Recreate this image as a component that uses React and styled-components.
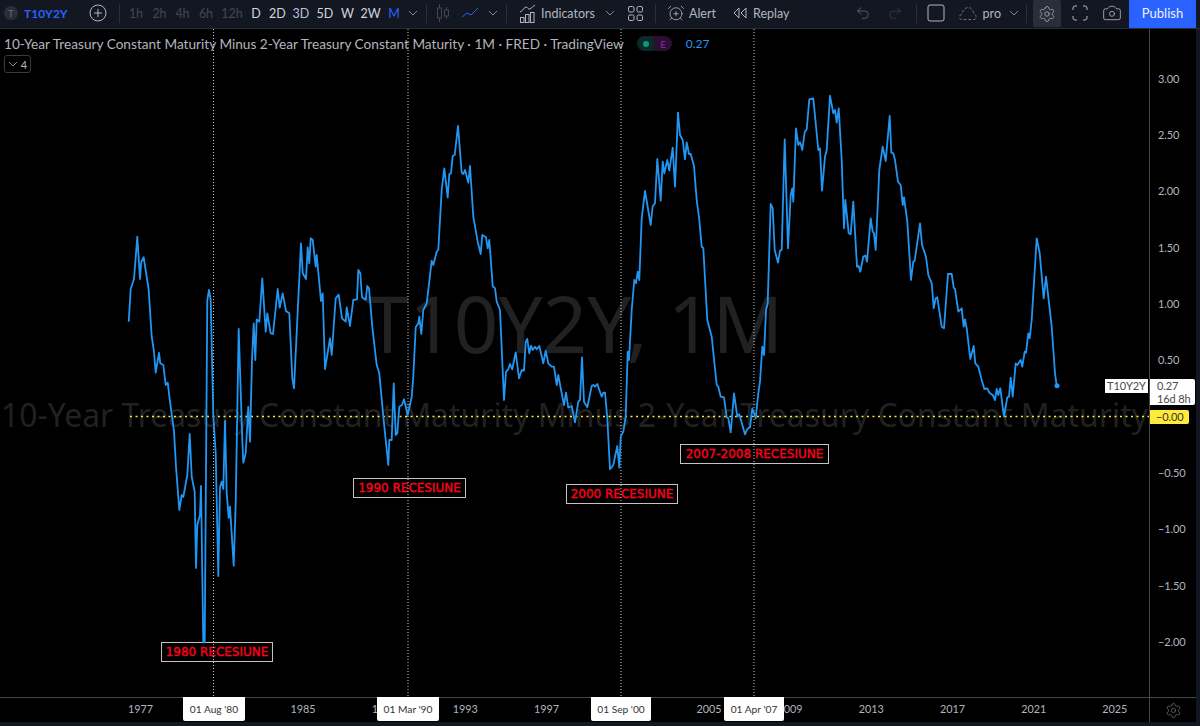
import React from "react";
import styled, { createGlobalStyle } from "styled-components";
import { AlarmClockPlus, Camera, Redo2, Settings, Undo2 } from "lucide-react";

const GlobalStyle = createGlobalStyle`
  html, body {
    margin: 0;
    padding: 0;
    background: #131722;
    overflow: hidden;
  }
  * {
    box-sizing: border-box;
  }
`;

const Page = styled.div`
  width: 1200px;
  height: 726px;
  display: flex;
  flex-direction: column;
  background: #131722;
  font-family: "Lato", "Liberation Sans", sans-serif;
  color: #b2b5be;
`;

const Toolbar = styled.header`
  height: 29px;
  flex: none;
  display: flex;
  align-items: stretch;
  padding-right: 4px;
  padding-bottom: 2px;
  border-bottom: 1px solid #2a2e39;
  font-size: 12.5px;
`;

const SymbolBox = styled.div`
  width: 84px;
  display: flex;
  align-items: center;
  gap: 6px;
  padding-left: 4px;
`;

const SymbolBadge = styled.span`
  width: 14px;
  height: 14px;
  border-radius: 50%;
  background: #2a2e39;
  color: #6a6d78;
  font-size: 9px;
  display: flex;
  align-items: center;
  justify-content: center;
`;

const SymbolName = styled.span`
  color: #2962ff;
  font-size: 12px;
  font-weight: 700;
`;

const Cell = styled.div`
  width: ${(p) => p.$w}px;
  flex: none;
  display: flex;
  align-items: center;
  justify-content: center;
  padding-left: ${(p) => p.$pad || 0}px;
  color: ${(p) => p.$color || "#b2b5be"};
`;

const Sep = styled.span`
  width: 1px;
  flex: none;
  margin: 4px ${(p) => p.$right || 0}px 3px ${(p) => p.$left || 0}px;
  background: #2a2e39;
`;

const TextButton = styled.div`
  width: ${(p) => p.$w}px;
  flex: none;
  display: flex;
  align-items: center;
  gap: ${(p) => p.$gap}px;
  padding-left: ${(p) => p.$pad}px;
  color: #b2b5be;
  white-space: nowrap;
`;

const Spacer = styled.div`
  flex: 1;
`;

const GearCell = styled(Cell)`
  background: #2a2e39;
  margin-bottom: -1px;
  border-radius: 2px;
`;

const Publish = styled.button`
  width: 67px;
  margin: 0 0 -2px 1px;
  padding: 0 0 2px;
  border: 0;
  background: #2962ff;
  color: #eef1fa;
  font: inherit;
  font-size: 13px;
`;

const Main = styled.div`
  flex: 1;
  min-height: 0;
  display: flex;
  padding-right: 4px;
`;

const Pane = styled.section`
  position: relative;
  width: 1149px;
  flex: none;
  background: #000;
  overflow: hidden;
`;

const Legend = styled.div`
  position: relative;
  display: flex;
  align-items: center;
  height: 26px;
  padding: 3px 0 0 4px;
  font-size: 13.65px;
  color: #b2b5be;
  white-space: nowrap;
`;

const StatusPill = styled.span`
  display: flex;
  height: 15px;
  width: 35px;
  margin-left: 13px;
  border-radius: 8px;
  overflow: hidden;
`;

const PillPart = styled.span`
  flex: 1;
  display: flex;
  align-items: center;
  justify-content: center;
  background: ${(p) => p.$bg};
  color: #8e24aa;
  font-size: 10px;
`;

const Dot = styled.span`
  width: 6px;
  height: 6px;
  border-radius: 50%;
  background: #089981;
`;

const LegendValue = styled.span`
  margin-left: 14px;
  color: #2196f3;
  font-size: 12px;
`;

const Collapse = styled.div`
  position: relative;
  width: 27px;
  height: 18px;
  margin-left: 4px;
  border: 1px solid #363a45;
  border-radius: 3px;
  display: flex;
  align-items: center;
  justify-content: center;
  gap: 3px;
  font-size: 11px;
`;

const Watermark = styled.div`
  position: absolute;
  inset: 0;
  padding-bottom: 15px;
  display: flex;
  flex-direction: column;
  align-items: center;
  justify-content: center;
  color: #212121;
  white-space: nowrap;
  pointer-events: none;
`;

const WatermarkBig = styled.div`
  font-size: 78px;
  line-height: 96px;
  font-family: "Noto Sans", sans-serif;
`;

const WatermarkSmall = styled.div`
  font-size: 31.9px;
  line-height: 42px;
  margin-top: 23px;
  font-family: "Noto Sans", sans-serif;
`;

const Recession = styled.div`
  position: absolute;
  left: ${(p) => p.$x}px;
  top: ${(p) => p.$y}px;
  width: ${(p) => p.$w}px;
  height: 20px;
  border: 1px solid #c4c4c4;
  background: #000;
  color: #ff0019;
  -webkit-text-stroke: 0.35px #ff0019;
  font-family: "DejaVu Sans", sans-serif;
  font-size: 12px;
  line-height: 18px;
  text-align: center;
  white-space: nowrap;
`;

const ChartSvg = styled.svg`
  position: absolute;
  inset: 0;
  pointer-events: none;
`;

const PriceAxis = styled.aside`
  position: relative;
  flex: 1;
  background: #000;
  border-left: 1px solid #434651;
  padding-top: 21px;
  font-size: 11px;
  letter-spacing: -0.1px;
  color: #b2b5be;
`;

const Tick = styled.div`
  height: 56.35px;
  display: flex;
  align-items: center;
  padding-left: 8px;
  visibility: ${(p) => (p.$hidden ? "hidden" : "visible")};
`;

const PriceTag = styled.div`
  position: absolute;
  left: 0;
  top: 350px;
  width: 45px;
  height: 26px;
  background: #fff;
  color: #4a4a4a;
  border-radius: 0 2px 2px 0;
  padding-left: 7px;
  line-height: 13px;
`;

const NameTag = styled.div`
  position: absolute;
  left: -45px;
  top: 350px;
  width: 43px;
  height: 14px;
  background: #fff;
  color: #4a4a4a;
  line-height: 14px;
  text-align: center;
`;

const ZeroTag = styled.div`
  position: absolute;
  left: 0;
  top: 381px;
  width: 39px;
  height: 14px;
  background: #ffeb3b;
  color: #333;
  border-radius: 0 2px 2px 0;
  padding-left: 6px;
  line-height: 14px;
`;

const TimeRow = styled.div`
  height: 25px;
  flex: none;
  display: flex;
  margin-right: 4px;
  background: #000;
  border-top: 1px solid #434651;
  font-size: 10.8px;
`;

const TimeScale = styled.div`
  position: relative;
  width: 1149px;
  flex: none;
  display: flex;
  padding-left: 100px;
`;

const Year = styled.span`
  width: 81.2px;
  flex: none;
  text-align: center;
  line-height: 22px;
  color: #b2b5be;
  visibility: ${(p) => (p.$hidden ? "hidden" : "visible")};
`;

const DateTag = styled.span`
  position: absolute;
  left: ${(p) => p.$x}px;
  top: -1px;
  width: ${(p) => p.$w}px;
  height: 24px;
  background: #fff;
  color: #333;
  border-radius: 0 0 2px 2px;
  text-align: center;
  line-height: 25px;
  font-size: 10.2px;
`;

const Corner = styled.div`
  flex: 1;
  border-left: 1px solid #434651;
  display: flex;
  align-items: center;
  justify-content: center;
  color: #787b86;
`;

const Footer = styled.div`
  flex: none;
  height: 4px;
`;

const intervals = [
  ["1h", 24, "#434651"],
  ["2h", 23, "#434651"],
  ["4h", 23, "#434651"],
  ["6h", 24, "#434651"],
  ["12h", 28, "#434651"],
  ["D", 20, "#d1d4dc"],
  ["2D", 23, "#d1d4dc"],
  ["3D", 24, "#b2c2de"],
  ["5D", 24, "#d1d4dc"],
  ["W", 21, "#d1d4dc"],
  ["2W", 25, "#d1d4dc"],
  ["M", 22, "#2962ff"],
];

const prices = ["3.00", "2.50", "2.00", "1.50", "1.00", "0.50", "0.00", "\u22120.50", "\u22121.00", "\u22121.50", "\u22122.00"];

// 1981 and 2001 sit fully behind the crosshair date tags
const years = [1977, 1981, 1985, 1989, 1993, 1997, 2001, 2005, 2009, 2013, 2017, 2021, 2025];
const coveredYears = [1981, 2001];

const crosshairs = [213.5, 408, 621, 754];

const dates = [
  ["01 Aug '80", 183, 62],
  ["01 Mar '90", 377, 62],
  ["01 Sep '00", 591, 60],
  ["01 Apr '07", 724, 60],
];

const recessions = [
  ["1980 RECESIUNE", 161, 613, 112],
  ["1990 RECESIUNE", 353, 449, 113],
  ["2000 RECESIUNE", 566, 455, 112],
  ["2007-2008 RECESIUNE", 680, 415, 149],
];

// traced off the monthly series, page coordinates
const series = `128.7,321.7 130.7,289 134,279 137.3,236.7 140,279 141.3,261.7 143.7,257.3 148.7,290 151.7,336.7 154,351.7 155.7,372.7 159,353 160.3,363.3 163.3,365 165.7,385 167.7,382.7 170,401.7 174,431 176,466.7 179.3,510 181.7,495 183.3,497 187.3,475 189.7,434 191.7,476.7 194.7,491.7 196,568 197.3,525 200,515 201,486 203.3,642.7 204.7,642 207.3,300 209,290 210.7,300 213.3,416 215.7,453 218.3,576 220,486.7 221.7,481.7 223.3,489 225,421 226.7,493 228.7,518 230,506.7 233.7,565.7 235.7,503 238.7,329 242.3,440 243.3,462.7 245.7,453 248.3,406.7 250,441.7 252,360 253.7,323.3 255.3,360 256.7,319.3 259.3,321.7 262.3,278.3 265.7,331.7 267.3,313.3 270.7,333.3 273,334 277.7,289 279.7,307.7 282.7,293.3 286,311 289.3,313.3 292.3,378.3 294,388.3 301,243.3 302.7,273.3 306,279 307.7,247.3 309.3,263.3 310.7,238.3 312.7,240 315.7,266.7 316.7,255 321,301 322.7,293.3 325,369 330,338.3 331.7,355 335.7,298.3 338.7,294.7 342,318.3 345.7,321.7 346.7,307.3 350,326 353.3,300 357,299.3 358.3,270 360.3,273.3 362,297.3 365.7,300 367.3,286 369,288.3 372.3,326.7 376.7,365 379.3,373.3 383.3,416.7 388.3,465 389.3,440 391.7,440 393.7,383.3 395.7,435 397.3,433.3 399.3,406.7 402,405 404,399.3 407.7,415 411.7,396.7 413.3,376.7 415.7,327.3 418.3,323.3 419.3,316.7 421.3,334 423.3,310 426.7,303.3 428.7,286.7 431.7,260.7 433.3,265 436.7,251.7 438.3,250 441.7,190 444.3,168.3 447.7,197.7 449.3,174 451,173.3 452.7,156 454.7,155 458,126 461.7,172.7 463.3,174 465,170 468.3,182.7 470,166 473.3,216.7 477.7,241.7 480.7,254 482.3,235 486,237.3 487.7,248.3 489.3,240 492.7,286 495,288.3 496.7,301.7 500,310 504,400 506,371.7 508.3,369.3 510,364 512.3,369.3 515.7,352.3 519,378.3 521.7,370 524,370.7 525.7,341.7 527.3,339 529.3,353.3 531,345.7 532.7,350 535,346.7 536.7,349.3 539.3,346 543.3,363.3 545.7,350.7 548.3,363.3 551.7,366.7 554,366.7 556.7,385 558.3,375 561.7,393.3 564,405 566,392.7 568.3,407.7 571.7,406 575,422.3 578.3,401.7 580,400 582,357.3 584,401.7 587.3,407.3 591.7,386 593.3,385 595,386.7 597.3,384 601.7,396.7 603.3,392.7 605,392.7 607.3,418.3 610,469.3 613.3,465 617.3,446 619.3,467.7 620.7,436.7 623.3,431.7 625.7,416.7 627.7,351.7 629,360 631.7,310 634.3,280 636,283.3 637.7,271.7 639.3,280 641.7,218.3 645,191 650.7,225 652.7,206 655,203.3 657.3,159 660.7,200.7 662.7,161.7 664.3,173.3 667.3,160 669.3,170.7 672.7,147.7 675,186.7 678,112.7 680,135 682.7,140 685,159.3 686.7,142.3 689,154 690.7,154 694,166 696.7,200 699.3,220 701.7,246.7 703.3,248 707.3,320 711.7,336.7 716.7,385 718.3,386.7 720.7,396.7 724,397.3 726.7,417.3 728.3,418.3 730.7,432.3 734,393.3 737.3,416.7 739.3,414.3 745,434.3 747.3,429 750,427.3 752.3,408.3 755.7,418.3 758.3,393.3 760,381.7 762.3,346.7 764,355 766,310 767.7,303.3 770.7,204 772.7,208.3 774.7,250 778,262.7 780,250.7 781.7,250 784.7,139.3 788,248.3 790.7,195 792.3,188.3 793.3,201.7 796,128.3 798.3,145 800,142.3 801,145 802.3,150 804.7,132.3 806.7,129.3 809.3,99.3 813.3,98.3 818.3,150 820,148.3 822,190.7 825,156.7 826.7,150 830,95.7 833.3,113.3 835,110 836.7,122.7 838.7,108.3 841.7,160 844,228.3 845.3,200 848.7,233.3 850.7,234.3 853.3,201.7 857,266.7 858.7,266 860.3,271.7 863.3,256.7 865.7,255.7 867,261.7 870.7,218.3 872.7,231.7 874,233.3 875.7,250 879.3,170 882.7,146.7 885.7,161 889.7,116 891.3,152.7 893.3,153.3 895,160 898,181.7 900.7,185 902.7,205 904,197.3 907.3,221.7 911,280 913.3,261.7 914.7,260.7 920,223.3 922,245 926,256.7 928.3,275 931.7,283.3 933.7,308.3 935.7,298.3 937.3,297.3 941.7,326.7 944,328.3 948,274 951.7,274 953.7,287.7 955,289 958.3,311.7 961.7,308.3 963.7,326.7 965,319.3 966.7,328.3 970.3,359 973.7,346 975.3,363.3 978.3,366.7 981.7,380 984.3,389 987.3,388.3 989.3,392.7 992.7,395 995,400 996.7,389 998.3,395 1000.3,388.3 1004,416.7 1007.3,397.3 1009,396.7 1010.7,377.7 1012.7,396.7 1015.7,363.3 1017.3,365 1020.7,360 1022.3,366.7 1024.7,351.7 1026,352.7 1028.3,333.3 1029.7,338.3 1031.7,320 1036.7,238.3 1039.7,253.3 1043.7,298.3 1046,276.7 1051.7,326.7 1055,373.3 1056.7,385.7`;

const Chevron = () => (
  <svg width="10" height="6" viewBox="0 0 10 6" fill="none" stroke="#868993">
    <path d="M1 1l4 4 4-4" />
  </svg>
);

const CandleIcon = () => (
  <svg width="16" height="20" viewBox="0 0 16 20" fill="none" stroke="#434651">
    <path d="M4.5 1v4M4.5 15v4M11.5 4v3M11.5 13v3" />
    <rect x="2.5" y="5" width="4" height="10" />
    <rect x="9.5" y="7" width="4" height="6" />
  </svg>
);

const LineIcon = () => (
  <svg width="18" height="12" viewBox="0 0 18 12" fill="none" stroke="#2962ff">
    <path d="M1 10l5-4 4 2 7-7" />
  </svg>
);

const IndicatorsIcon = () => (
  <svg width="17" height="19" viewBox="0 0 17 19" fill="none" stroke="#b2b5be">
    <path d="M1 8c3-1 4-5 6-5s2 3 4 2 3-3 5-4" />
    <rect x="1.5" y="13.5" width="3.5" height="5" />
    <rect x="6.5" y="10.5" width="3.5" height="8" />
    <rect x="11.5" y="8.5" width="3.5" height="10" />
  </svg>
);

const GridIcon = () => (
  <svg width="15" height="15" viewBox="0 0 15 15" fill="none" stroke="#b2b5be">
    <rect x="0.5" y="0.5" width="5.5" height="5.5" rx="1.5" />
    <rect x="9" y="0.5" width="5.5" height="5.5" rx="1.5" />
    <rect x="0.5" y="9" width="5.5" height="5.5" rx="1.5" />
    <rect x="9" y="9" width="5.5" height="5.5" rx="1.5" />
  </svg>
);

const ReplayIcon = () => (
  <svg width="14" height="12" viewBox="0 0 14 12" fill="none" stroke="#b2b5be">
    <path d="M6 1L1 6l5 5zM13 1L8 6l5 5z" />
  </svg>
);

const SquareIcon = () => (
  <svg width="18" height="18" viewBox="0 0 18 18" fill="none" stroke="#b2b5be">
    <rect x="1" y="1" width="16" height="16" rx="2" />
  </svg>
);

const CloudIcon = () => (
  <svg width="21" height="15" viewBox="0 0 21 15" fill="none" stroke="#787b86" strokeDasharray="3 2">
    <path d="M4 14C1 14 0.5 9 4 8.5 5 3 9 1 11 1s5 2 6 7c3.5 1 3 6 0 6z" />
  </svg>
);

const FullscreenIcon = () => (
  <svg width="16" height="16" viewBox="0 0 16 16" fill="none" stroke="#b2b5be">
    <path d="M5 1H3a2 2 0 0 0-2 2v2M11 1h2a2 2 0 0 1 2 2v2M5 15H3a2 2 0 0 1-2-2v-2M11 15h2a2 2 0 0 0 2-2v-2" />
  </svg>
);

const App = () => {
  return (
    <Page>
      <GlobalStyle />
      <Toolbar>
        <SymbolBox>
          <SymbolBadge>T</SymbolBadge>
          <SymbolName>T10Y2Y</SymbolName>
        </SymbolBox>
        <Cell $w={28}>
          <svg width="18" height="18" viewBox="0 0 18 18" fill="none" stroke="#b2b5be">
            <circle cx="9" cy="9" r="8" />
            <path d="M9 5v8M5 9h8" />
          </svg>
        </Cell>
        <Sep $left={7} $right={4} />
        {intervals.map(([label, w, color]) => (
          <Cell key={label} $w={w} $color={color}>
            {label}
          </Cell>
        ))}
        <Cell $w={16}>
          <Chevron />
        </Cell>
        <Sep $left={5} />
        <Cell $w={32}>
          <CandleIcon />
        </Cell>
        <Cell $w={22}>
          <LineIcon />
        </Cell>
        <Cell $w={24}>
          <Chevron />
        </Cell>
        <Sep $left={1} />
        <TextButton $w={94} $pad={12} $gap={5}>
          <IndicatorsIcon />
          Indicators
        </TextButton>
        <Cell $w={18}>
          <Chevron />
        </Cell>
        <Cell $w={32}>
          <GridIcon />
        </Cell>
        <Sep $left={4} />
        <TextButton $w={60} $pad={11} $gap={4}>
          <AlarmClockPlus size={18} strokeWidth={1.1} />
          Alert
        </TextButton>
        <TextButton $w={74} $pad={17} $gap={6}>
          <ReplayIcon />
          Replay
        </TextButton>
        <Spacer />
        <Cell $w={32} $color="#787b86">
          <Undo2 size={16} strokeWidth={1} />
        </Cell>
        <Cell $w={32} $color="#434651">
          <Redo2 size={16} strokeWidth={1} />
        </Cell>
        <Sep $left={5} />
        <Cell $w={38}>
          <SquareIcon />
        </Cell>
        <TextButton $w={46} $pad={3} $gap={5}>
          <CloudIcon />
          pro
        </TextButton>
        <Cell $w={25}>
          <Chevron />
        </Cell>
        <Sep $right={6} />
        <GearCell $w={28}>
          <Settings size={18} strokeWidth={1} />
        </GearCell>
        <Cell $w={35} $pad={3}>
          <FullscreenIcon />
        </Cell>
        <Cell $w={32}>
          <Camera size={20} strokeWidth={1} />
        </Cell>
        <Publish>Publish</Publish>
      </Toolbar>

      <Main>
        <Pane>
          <Watermark>
            <WatermarkBig>T10Y2Y, 1M</WatermarkBig>
            <WatermarkSmall>10-Year Treasury Constant Maturity Minus 2-Year Treasury Constant Maturity</WatermarkSmall>
          </Watermark>
          <Legend>
            10-Year Treasury Constant Maturity Minus 2-Year Treasury Constant Maturity · 1M · FRED · TradingView
            <StatusPill>
              <PillPart $bg="#0b2a27">
                <Dot />
              </PillPart>
              <PillPart $bg="#2a0f33">E</PillPart>
            </StatusPill>
            <LegendValue>0.27</LegendValue>
          </Legend>
          <Collapse>
            <Chevron />4
          </Collapse>
          {recessions.map(([label, x, y, w]) => (
            <Recession key={label} $x={x} $y={y} $w={w}>
              {label}
            </Recession>
          ))}
          <ChartSvg width="1149" height="668" viewBox="0 29 1149 668">
            {crosshairs.map((x) => (
              <line key={x} x1={x} x2={x} y1="29" y2="697" stroke="#cfcfcf" strokeDasharray="1 2" />
            ))}
            <line x1="130" x2="1149" y1="416.5" y2="416.5" stroke="#ffeb3b" strokeWidth="1.4" strokeDasharray="2 3.5" />
            <polyline points={series} fill="none" stroke="#2196f3" strokeWidth="1.8" strokeLinejoin="round" />
            <circle cx="1057" cy="385.7" r="2.5" fill="#2196f3" />
          </ChartSvg>
        </Pane>
        <PriceAxis>
          {prices.map((p) => (
            <Tick key={p} $hidden={p === "0.00"}>
              {p}
            </Tick>
          ))}
          <NameTag>T10Y2Y</NameTag>
          <PriceTag>
            0.27
            <br />
            16d 8h
          </PriceTag>
          <ZeroTag>−0.00</ZeroTag>
        </PriceAxis>
      </Main>

      <TimeRow>
        <TimeScale>
          {years.map((y) => (
            <Year key={y} $hidden={coveredYears.includes(y)}>
              {y}
            </Year>
          ))}
          {dates.map(([label, x, w]) => (
            <DateTag key={label} $x={x} $w={w}>
              {label}
            </DateTag>
          ))}
        </TimeScale>
        <Corner>
          <Settings size={17} strokeWidth={1} />
        </Corner>
      </TimeRow>
      <Footer />
    </Page>
  );
};

export default App;
